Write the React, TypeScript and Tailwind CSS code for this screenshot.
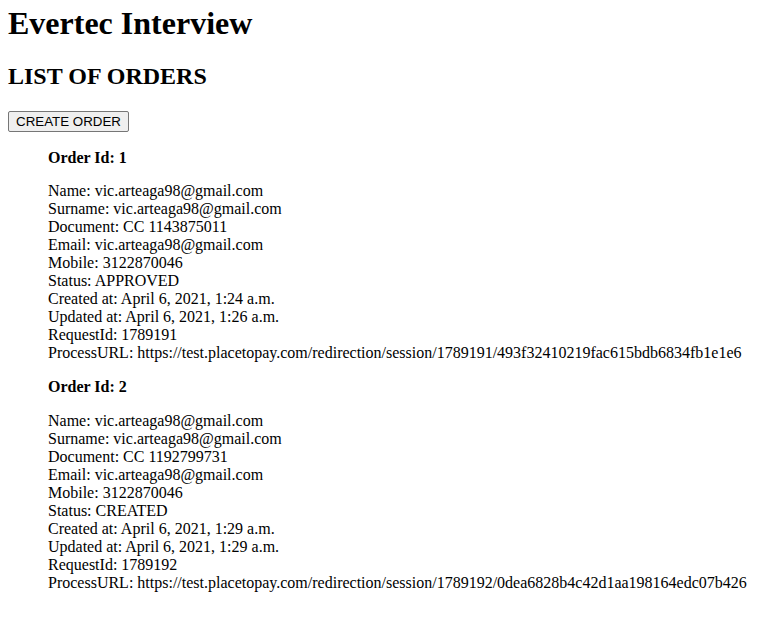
import React from "react";

type Order = {
  id: number;
  document: string;
  status: string;
  created: string;
  updated: string;
  requestId: string;
  url: string;
};

const orders: Order[] = [
  {
    id: 1,
    document: "CC 1143875011",
    status: "APPROVED",
    created: "April 6, 2021, 1:24 a.m.",
    updated: "April 6, 2021, 1:26 a.m.",
    requestId: "1789191",
    url: "https://test.placetopay.com/redirection/session/1789191/493f32410219fac615bdb6834fb1e1e6",
  },
  {
    id: 2,
    document: "CC 1192799731",
    status: "CREATED",
    created: "April 6, 2021, 1:29 a.m.",
    updated: "April 6, 2021, 1:29 a.m.",
    requestId: "1789192",
    url: "https://test.placetopay.com/redirection/session/1789192/0dea6828b4c42d1aa198164edc07b426",
  },
];

export default function App() {
  const email = "vic.arteaga98@gmail.com";
  return (
    <div
      className="min-h-[624px] bg-white px-2 text-black"
      style={{ fontFamily: '"Liberation Serif", "Times New Roman", serif' }}
    >
      <h1 className="pt-[5px] text-[32px] font-bold leading-[37px]">Evertec Interview</h1>
      <h2 className="mt-[20px] text-[24px] font-bold leading-[28px]">LIST OF ORDERS</h2>
      <button
        className="mt-[21px] h-[21px] w-[121px] rounded-[2px] border border-[#767676] bg-[#efefef] text-[13.33px] leading-[19px] text-black"
        style={{ fontFamily: '"Liberation Sans", Arial, sans-serif' }}
      >
        CREATE ORDER
      </button>
      <ul className="pl-10">
        {orders.map((o, i) => (
          <li key={o.id} className={i === 0 ? "mt-[16px]" : "mt-[16px]"}>
            <h4 className="text-[16px] font-bold leading-[18px]">Order Id: {o.id}</h4>
            <div className={i === 0 ? "mt-[15px] text-[16px] leading-[18px]" : "mt-[16px] text-[16px] leading-[18px]"}>
              <div>Name: {email}</div>
              <div>Surname: {email}</div>
              <div>Document: {o.document}</div>
              <div>Email: {email}</div>
              <div>Mobile: 3122870046</div>
              <div>Status: {o.status}</div>
              <div>Created at: {o.created}</div>
              <div>Updated at: {o.updated}</div>
              <div>RequestId: {o.requestId}</div>
              <div className="whitespace-nowrap">ProcessURL: {o.url}</div>
            </div>
          </li>
        ))}
      </ul>
    </div>
  );
}
